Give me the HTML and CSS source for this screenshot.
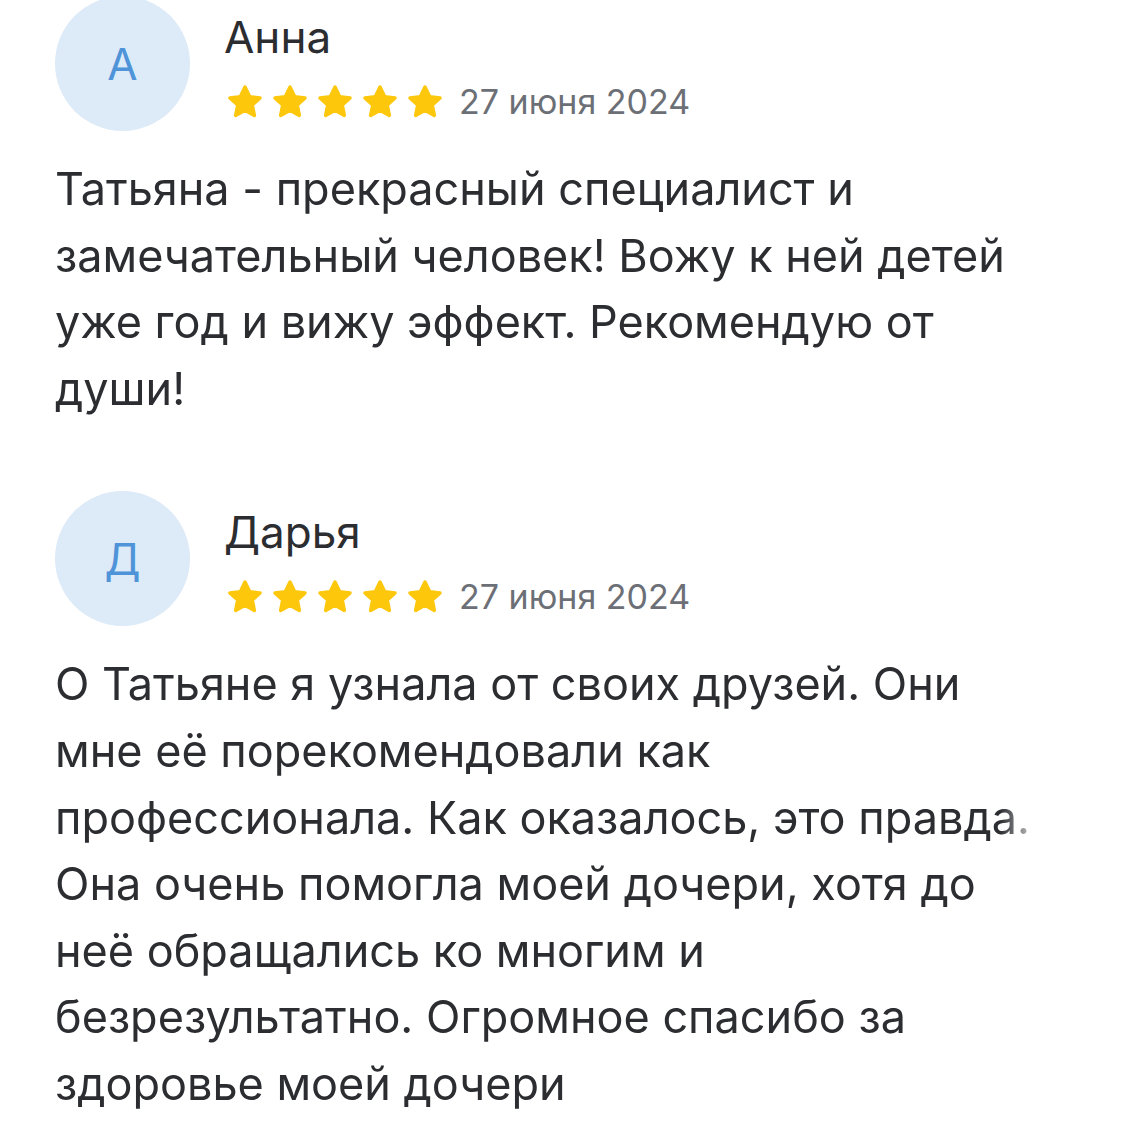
FILE: index.html
```html
<!DOCTYPE html>
<html lang="ru">
<head>
  <meta charset="UTF-8">
  <title>Отзывы</title>
  <link rel="stylesheet" href="styles.css">
</head>
<body>

<div class="reviews">
  <div class="review">
    <div class="review-head">
      <div class="avatar">А</div>
      <div class="meta">
        <div class="name">Анна</div>
        <div class="rating">
          <div class="stars">
            <svg viewBox="0 0 24 24"><polygon points="12,2.5 14.9,8.6 21.5,9.4 16.6,13.9 17.9,20.5 12,17.2 6.1,20.5 7.4,13.9 2.5,9.4 9.1,8.6"/></svg>
            <svg viewBox="0 0 24 24"><polygon points="12,2.5 14.9,8.6 21.5,9.4 16.6,13.9 17.9,20.5 12,17.2 6.1,20.5 7.4,13.9 2.5,9.4 9.1,8.6"/></svg>
            <svg viewBox="0 0 24 24"><polygon points="12,2.5 14.9,8.6 21.5,9.4 16.6,13.9 17.9,20.5 12,17.2 6.1,20.5 7.4,13.9 2.5,9.4 9.1,8.6"/></svg>
            <svg viewBox="0 0 24 24"><polygon points="12,2.5 14.9,8.6 21.5,9.4 16.6,13.9 17.9,20.5 12,17.2 6.1,20.5 7.4,13.9 2.5,9.4 9.1,8.6"/></svg>
            <svg viewBox="0 0 24 24"><polygon points="12,2.5 14.9,8.6 21.5,9.4 16.6,13.9 17.9,20.5 12,17.2 6.1,20.5 7.4,13.9 2.5,9.4 9.1,8.6"/></svg>
          </div>
          <span class="date">27 июня 2024</span>
        </div>
      </div>
    </div>
    <p class="text">Татьяна - прекрасный специалист и замечательный человек! Вожу к ней детей уже год и вижу эффект. Рекомендую от души!</p>
  </div>

  <div class="review">
    <div class="review-head">
      <div class="avatar">Д</div>
      <div class="meta">
        <div class="name">Дарья</div>
        <div class="rating">
          <div class="stars">
            <svg viewBox="0 0 24 24"><polygon points="12,2.5 14.9,8.6 21.5,9.4 16.6,13.9 17.9,20.5 12,17.2 6.1,20.5 7.4,13.9 2.5,9.4 9.1,8.6"/></svg>
            <svg viewBox="0 0 24 24"><polygon points="12,2.5 14.9,8.6 21.5,9.4 16.6,13.9 17.9,20.5 12,17.2 6.1,20.5 7.4,13.9 2.5,9.4 9.1,8.6"/></svg>
            <svg viewBox="0 0 24 24"><polygon points="12,2.5 14.9,8.6 21.5,9.4 16.6,13.9 17.9,20.5 12,17.2 6.1,20.5 7.4,13.9 2.5,9.4 9.1,8.6"/></svg>
            <svg viewBox="0 0 24 24"><polygon points="12,2.5 14.9,8.6 21.5,9.4 16.6,13.9 17.9,20.5 12,17.2 6.1,20.5 7.4,13.9 2.5,9.4 9.1,8.6"/></svg>
            <svg viewBox="0 0 24 24"><polygon points="12,2.5 14.9,8.6 21.5,9.4 16.6,13.9 17.9,20.5 12,17.2 6.1,20.5 7.4,13.9 2.5,9.4 9.1,8.6"/></svg>
          </div>
          <span class="date">27 июня 2024</span>
        </div>
      </div>
    </div>
    <p class="text">О Татьяне я узнала от своих друзей. Они мне её порекомендовали как профессионала. Как оказалось, это правда. Она очень помогла моей дочери, хотя до неё обращались ко многим и безрезультатно. Огромное спасибо за здоровье моей дочери</p>
  </div>
</div>

</body>
</html>
```

FILE: styles.css
```css
body {
  margin: 0;
  background: #ffffff;
  font-family: Inter, "Noto Sans", sans-serif;
  color: #2b2d31;
  overflow: hidden;
}
.reviews {
  padding: 0 0 0 55px;
  margin-top: -4px;
  display: flex;
  flex-direction: column;
  gap: 69px;
}
.review-head {
  display: flex;
  align-items: flex-start;
  gap: 34px;
}
.avatar {
  width: 135px;
  height: 135px;
  border-radius: 50%;
  background: #ddeaf8;
  color: #4f93d8;
  font-size: 44px;
  display: flex;
  align-items: center;
  justify-content: center;
  flex-shrink: 0;
}
.meta {
  padding-top: 17px;
}
.name {
  font-size: 44px;
  line-height: 48px;
  color: #2b2d31;
}
.rating {
  display: flex;
  align-items: center;
  margin-top: 21px;
  height: 40px;
}
.stars {
  display: flex;
  gap: 7px;
  margin-left: 2px;
}
.stars svg {
  width: 38px;
  height: 38px;
  fill: #fdc70c;
  stroke: #fdc70c;
  stroke-width: 2.2;
  stroke-linejoin: round;
}
.date {
  font-size: 34px;
  line-height: 40px;
  color: #6c7076;
  margin-left: 15px;
}
.text {
  margin: 25px 0 0;
  width: 985px;
  font-size: 45px;
  line-height: 66.6px;
  color: #2b2d31;
  -webkit-mask-image: linear-gradient(to right, #000 945px, transparent 990px);
  mask-image: linear-gradient(to right, #000 945px, transparent 990px);
}
```
